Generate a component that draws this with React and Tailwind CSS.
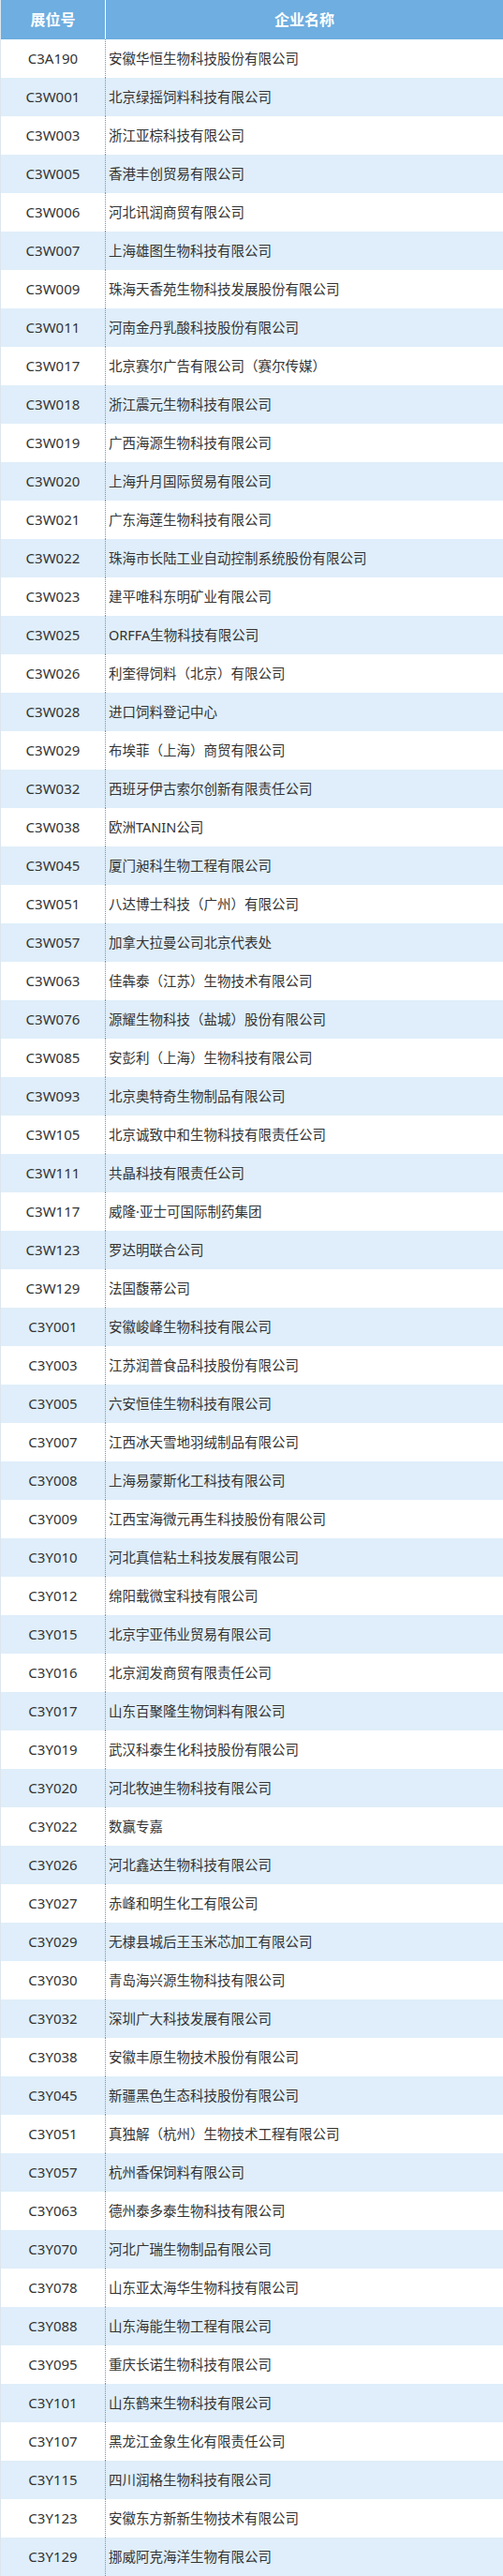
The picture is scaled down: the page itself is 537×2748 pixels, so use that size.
const rows = [
  ["C3A190", "安徽华恒生物科技股份有限公司"],
  ["C3W001", "北京绿摇饲料科技有限公司"],
  ["C3W003", "浙江亚棕科技有限公司"],
  ["C3W005", "香港丰创贸易有限公司"],
  ["C3W006", "河北讯润商贸有限公司"],
  ["C3W007", "上海雄图生物科技有限公司"],
  ["C3W009", "珠海天香苑生物科技发展股份有限公司"],
  ["C3W011", "河南金丹乳酸科技股份有限公司"],
  ["C3W017", "北京赛尔广告有限公司（赛尔传媒）"],
  ["C3W018", "浙江震元生物科技有限公司"],
  ["C3W019", "广西海源生物科技有限公司"],
  ["C3W020", "上海升月国际贸易有限公司"],
  ["C3W021", "广东海莲生物科技有限公司"],
  ["C3W022", "珠海市长陆工业自动控制系统股份有限公司"],
  ["C3W023", "建平唯科东明矿业有限公司"],
  ["C3W025", "ORFFA生物科技有限公司"],
  ["C3W026", "利奎得饲料（北京）有限公司"],
  ["C3W028", "进口饲料登记中心"],
  ["C3W029", "布埃菲（上海）商贸有限公司"],
  ["C3W032", "西班牙伊古索尔创新有限责任公司"],
  ["C3W038", "欧洲TANIN公司"],
  ["C3W045", "厦门昶科生物工程有限公司"],
  ["C3W051", "八达博士科技（广州）有限公司"],
  ["C3W057", "加拿大拉曼公司北京代表处"],
  ["C3W063", "佳犇泰（江苏）生物技术有限公司"],
  ["C3W076", "源耀生物科技（盐城）股份有限公司"],
  ["C3W085", "安彭利（上海）生物科技有限公司"],
  ["C3W093", "北京奥特奇生物制品有限公司"],
  ["C3W105", "北京诚致中和生物科技有限责任公司"],
  ["C3W111", "共晶科技有限责任公司"],
  ["C3W117", "威隆·亚士可国际制药集团"],
  ["C3W123", "罗达明联合公司"],
  ["C3W129", "法国馥蒂公司"],
  ["C3Y001", "安徽峻峰生物科技有限公司"],
  ["C3Y003", "江苏润普食品科技股份有限公司"],
  ["C3Y005", "六安恒佳生物科技有限公司"],
  ["C3Y007", "江西冰天雪地羽绒制品有限公司"],
  ["C3Y008", "上海易蒙斯化工科技有限公司"],
  ["C3Y009", "江西宝海微元再生科技股份有限公司"],
  ["C3Y010", "河北真信粘土科技发展有限公司"],
  ["C3Y012", "绵阳载微宝科技有限公司"],
  ["C3Y015", "北京宇亚伟业贸易有限公司"],
  ["C3Y016", "北京润发商贸有限责任公司"],
  ["C3Y017", "山东百聚隆生物饲料有限公司"],
  ["C3Y019", "武汉科泰生化科技股份有限公司"],
  ["C3Y020", "河北牧迪生物科技有限公司"],
  ["C3Y022", "数赢专嘉"],
  ["C3Y026", "河北鑫达生物科技有限公司"],
  ["C3Y027", "赤峰和明生化工有限公司"],
  ["C3Y029", "无棣县城后王玉米芯加工有限公司"],
  ["C3Y030", "青岛海兴源生物科技有限公司"],
  ["C3Y032", "深圳广大科技发展有限公司"],
  ["C3Y038", "安徽丰原生物技术股份有限公司"],
  ["C3Y045", "新疆黑色生态科技股份有限公司"],
  ["C3Y051", "真独解（杭州）生物技术工程有限公司"],
  ["C3Y057", "杭州香保饲料有限公司"],
  ["C3Y063", "德州泰多泰生物科技有限公司"],
  ["C3Y070", "河北广瑞生物制品有限公司"],
  ["C3Y078", "山东亚太海华生物科技有限公司"],
  ["C3Y088", "山东海能生物工程有限公司"],
  ["C3Y095", "重庆长诺生物科技有限公司"],
  ["C3Y101", "山东鹤来生物科技有限公司"],
  ["C3Y107", "黑龙江金象生化有限责任公司"],
  ["C3Y115", "四川润格生物科技有限公司"],
  ["C3Y123", "安徽东方新新生物技术有限公司"],
  ["C3Y129", "挪威阿克海洋生物有限公司"],
];

export default function App() {
  return (
    <div className="w-[537px] bg-white font-['Noto_Sans','Noto_Sans_CJK_SC',sans-serif] text-[#333]">
      <div className="border-l border-[#dde6ee]">
        {/* Header */}
        <div className="grid grid-cols-[112px_1fr] h-[42px] bg-[#6eaee0] text-white font-bold text-[16px]">
          <div className="flex items-center justify-center border-r border-white">展位号</div>
          <div className="flex items-center justify-center">企业名称</div>
        </div>

        {/* Rows */}
        {rows.map(([code, name], i) => (
          <div
            key={code}
            className={`grid grid-cols-[112px_1fr] h-[41px] ${i % 2 === 1 ? "bg-[#dfeefa]" : "bg-white"}`}
          >
            <div className="flex items-center justify-center text-[15px] border-r border-dotted border-[#5d9bd0]">
              {code}
            </div>
            <div className="flex items-center pl-[3px] text-[14.5px] whitespace-nowrap">
              {name}
            </div>
          </div>
        ))}
      </div>
    </div>
  );
}
